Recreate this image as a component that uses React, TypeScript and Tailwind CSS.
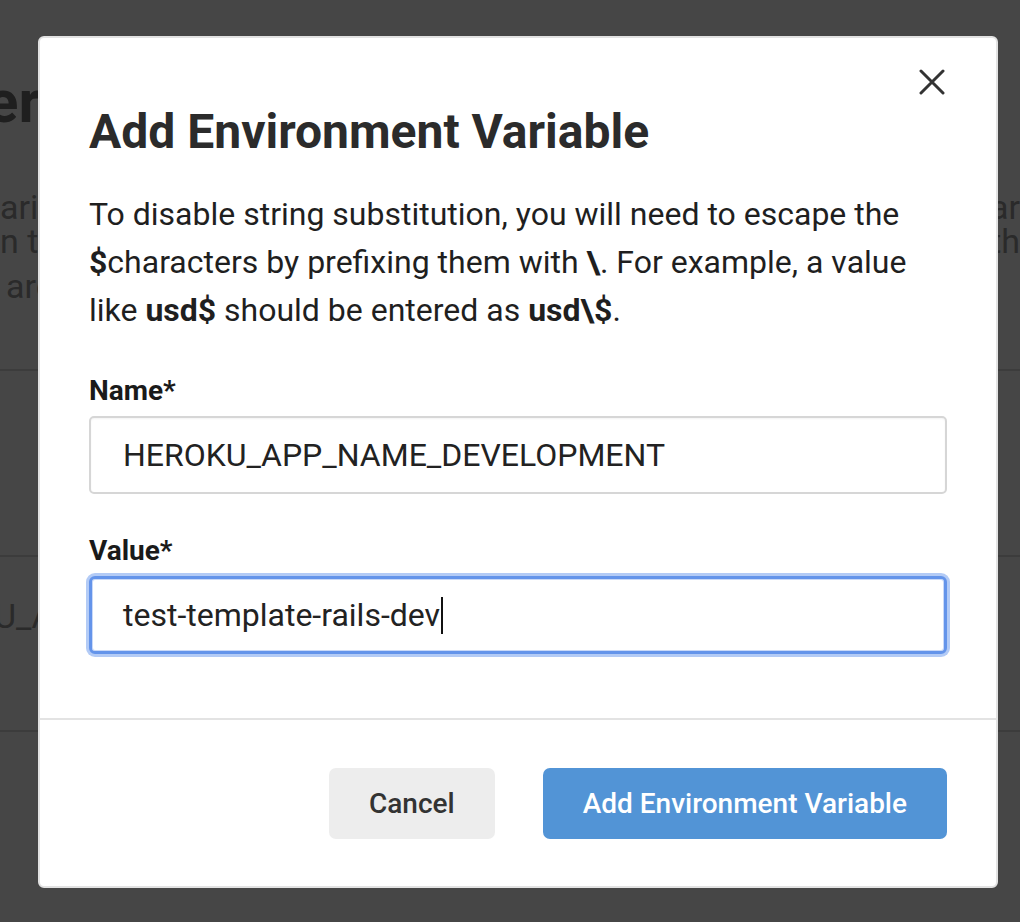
import { useState } from 'react';

const font = { fontFamily: 'Roboto, "Noto Sans", "Liberation Sans", sans-serif' };

function CloseIcon() {
  return (
    <svg width="26" height="26" viewBox="0 0 26 26" fill="none" stroke="#333333" strokeWidth="3" strokeLinecap="round">
      <path d="M2 2L24 24M24 2L2 24" />
    </svg>
  );
}

// Page behind the backdrop, only fragments of it peek out
function BackgroundPage() {
  return (
    <div className="min-h-[922px] w-full bg-white text-[#999999]">
      <div className="-ml-[14px] pt-[72px] text-[60px] font-bold leading-[60px] text-[#717171]">er</div>
      <div className="mt-[58px] flex justify-between text-[34px] leading-[34px]">
        <span>ari</span>
        <span className="pl-[2px]">ar</span>
      </div>
      <div className="flex justify-between text-[34px] leading-[34px]">
        <span>n th</span>
        <span className="pl-[2px]">th</span>
      </div>
      <div className="mt-[11px] pl-[6px] text-[34px] leading-[34px]">are</div>
      <div className="mt-[66px] h-[186px] border-t-2 border-[#dadada]" />
      <div className="h-[175px] border-t-2 border-[#dadada] pt-[42px] text-[34px] leading-[34px]">
        <span className="-ml-[6px]">U_A</span>
      </div>
      <div className="border-t-2 border-[#dadada]" />
    </div>
  );
}

export default function App() {
  const [name, setName] = useState('HEROKU_APP_NAME_DEVELOPMENT');

  return (
    <div className="relative h-[922px] w-[1020px] overflow-hidden" style={font}>
      <BackgroundPage />

      <div className="absolute inset-0 bg-black/[0.725] pl-[38px] pt-[36px]">
        <div className="relative w-[960px] rounded-[6px] border-2 border-[#e2e2e2] bg-white">
          <button className="absolute right-[50px] top-[30px] flex h-[28px] w-[28px] items-center justify-center">
            <CloseIcon />
          </button>

          <div className="px-[49px] pb-[64px] pt-[66px]">
            <h2 className="text-[48px] font-bold leading-[56px] text-[#2b2b2b]">Add Environment Variable</h2>
            <p className="mt-[30px] text-[32px] leading-[48px] text-[#1f1f1f]">
              To disable string substitution, you will need to escape the <b>$</b>characters by prefixing them with <b>\</b>. For example, a value like <b>usd$</b> should be entered as <b>usd\$</b>.
            </p>

            <label className="mt-[36px] block">
              <span className="block text-[28px] font-bold leading-[42px] text-[#1a1a1a]">Name*</span>
              <input
                value={name}
                onChange={e => setName(e.target.value)}
                className="mt-[4px] h-[78px] w-full rounded-[5px] border-2 border-[#d6d6d6] bg-white px-[32px] text-[32px] text-[#222222] outline-none shadow-[inset_0_1px_2px_rgba(0,0,0,0.05)]"
              />
            </label>

            <div className="mt-[36px]">
              <span className="block text-[28px] font-bold leading-[42px] text-[#1a1a1a]">Value*</span>
              <div className="mt-[4px] flex h-[78px] w-full items-center rounded-[6px] border-[3px] border-[#6494ea] bg-white px-[31px] text-[32px] text-[#222222] shadow-[0_0_0_3px_#b3cbf6,inset_0_0_0_1px_#c9d9f8]">
                <span>test-template-rails-dev</span>
                <span className="ml-[1px] h-[37px] w-[2px] bg-[#111111]" />
              </div>
            </div>
          </div>

          <div className="flex justify-end gap-[48px] border-t-2 border-[#e3e3e3] px-[49px] pb-[47px] pt-[48px]">
            <button className="h-[71px] rounded-[7px] bg-[#ededed] px-[40px] text-[28px] font-medium text-[#333333]">Cancel</button>
            <button className="h-[71px] rounded-[7px] bg-[#5294d6] px-[40px] text-[28px] font-medium text-white">Add Environment Variable</button>
          </div>
        </div>
      </div>
    </div>
  );
}
